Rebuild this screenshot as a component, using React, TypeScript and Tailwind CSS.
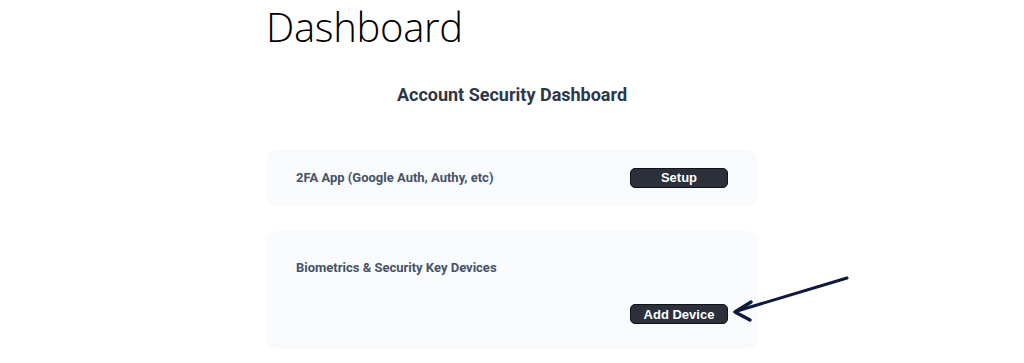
import React from "react";

export default function App() {
  return (
    <div className="relative w-[1024px] h-[363px] bg-white overflow-hidden">
      <div className="mx-auto w-[492px] flex flex-col">
        <h1
          className="-mt-[3px] h-[51px] text-[40px] leading-normal tracking-[-0.3px] text-black font-light"
          style={{ fontFamily: '"Open Sans", sans-serif' }}
        >
          Dashboard
        </h1>
        <h2
          className="mt-[35px] text-center text-[18px] leading-[24px] font-bold text-[#2d3748]"
          style={{ fontFamily: 'Roboto, sans-serif' }}
        >
          Account Security Dashboard
        </h2>
        <div className="mt-[42px] h-[57px] rounded-[12px] bg-[#f9fafc] flex items-center justify-between pl-[30px] pr-[30px]">
          <span className="mt-[1px] text-[13px] font-bold text-[#465266]" style={{ fontFamily: 'Roboto, sans-serif' }}>
            2FA App (Google Auth, Authy, etc)
          </span>
          <button
            className="w-[98px] h-[20px] rounded-[5px] bg-[#2b303b] border border-[#111318] text-white text-[13px] font-bold leading-none flex items-center justify-center"
            style={{ fontFamily: '"Liberation Sans", Arial, sans-serif' }}
          >
            Setup
          </button>
        </div>
        <div className="mt-[25px] h-[118px] rounded-[12px] bg-[#f9fafc] flex flex-col pl-[30px] pr-[30px] pt-[29px]">
          <span className="text-[13px] leading-[15px] font-bold text-[#465266]" style={{ fontFamily: 'Roboto, sans-serif' }}>
            Biometrics &amp; Security Key Devices
          </span>
          <div className="flex justify-end mt-[29px]">
            <button
              className="w-[98px] h-[20px] rounded-[5px] bg-[#2b303b] border border-[#111318] text-white text-[13px] font-bold leading-none flex items-center justify-center"
              style={{ fontFamily: '"Liberation Sans", Arial, sans-serif' }}
            >
              Add Device
            </button>
          </div>
        </div>
      </div>
      <svg className="absolute left-0 top-0" width="1024" height="363" viewBox="0 0 1024 363">
        <g stroke="#0e1a3c" strokeWidth="3" strokeLinecap="round" fill="none">
          <line x1="847" y1="278" x2="737" y2="311" />
          <polyline points="751,302 735,312 750,320" strokeLinejoin="round" strokeWidth="3.5" />
        </g>
      </svg>
    </div>
  );
}
